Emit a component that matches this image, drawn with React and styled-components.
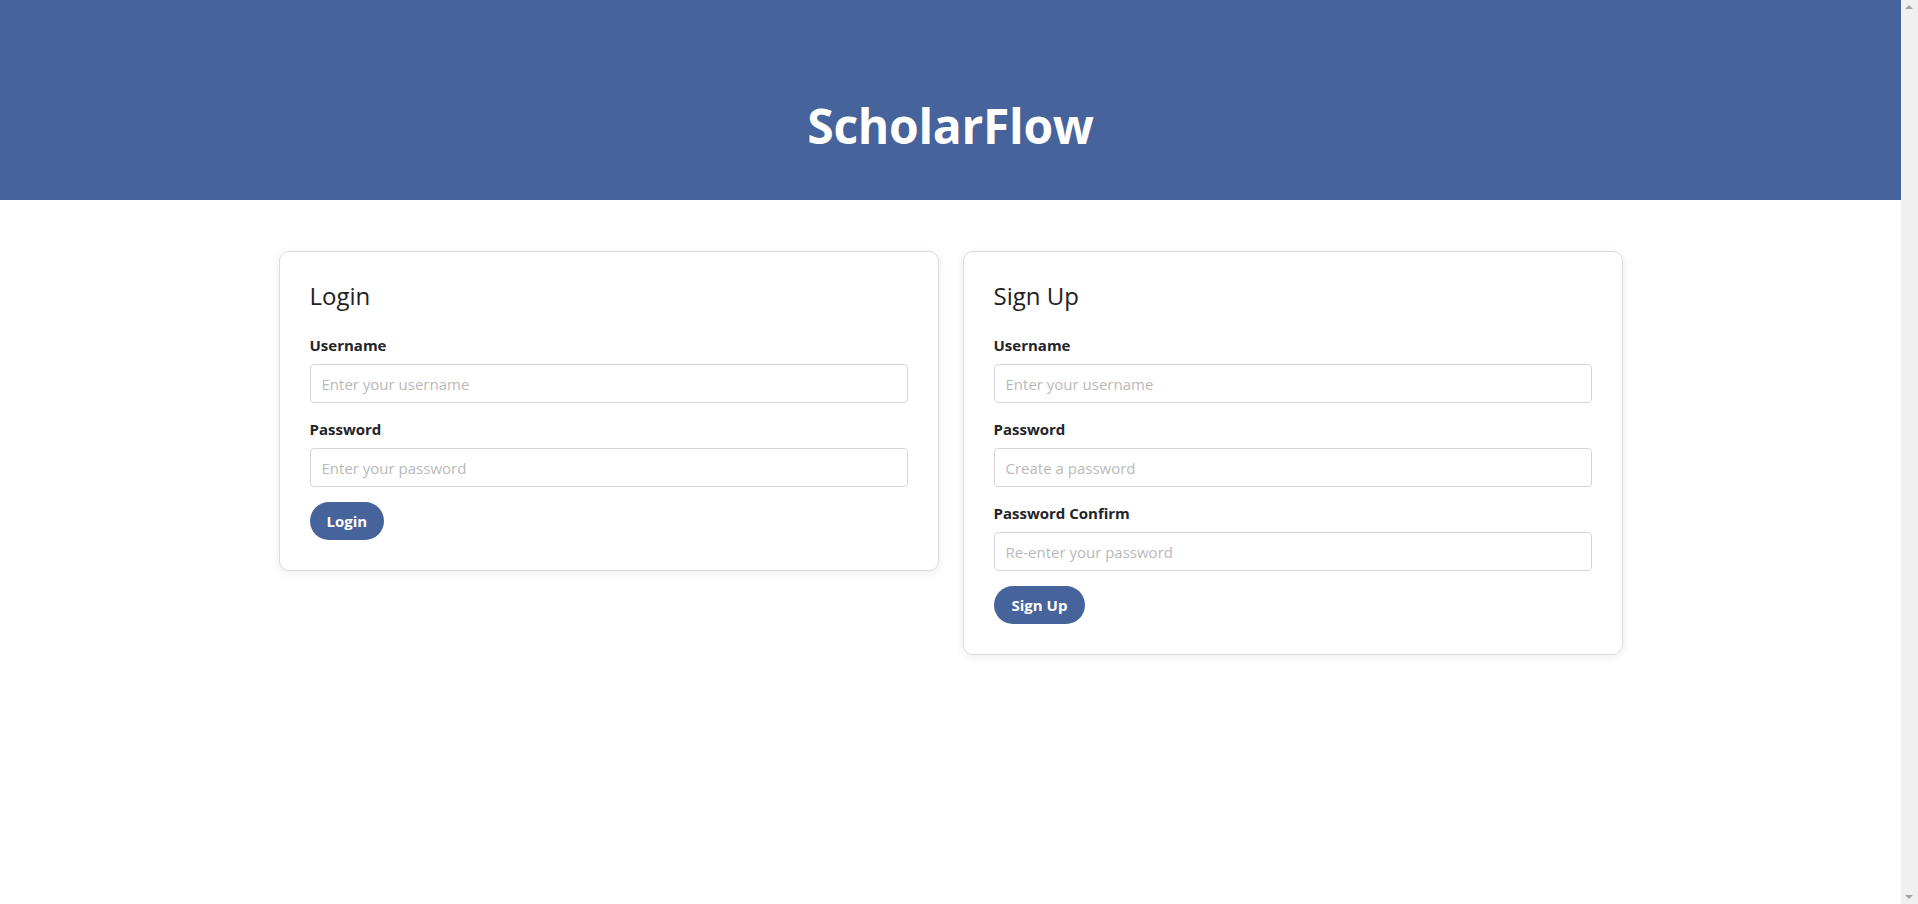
import React from "react";
import styled, { createGlobalStyle } from "styled-components";

const GlobalStyle = createGlobalStyle`
  * { box-sizing: border-box; }
  body {
    margin: 0;
    min-height: 100vh;
    border-right: 17px solid #f0f0f0;
    font-family: "Open Sans", "Noto Sans", "Liberation Sans", sans-serif;
    color: #212529;
    background: #ffffff;
  }
  body::before,
  body::after {
    content: "";
    position: fixed;
    right: 5px;
    width: 0;
    height: 0;
    border-left: 4px solid transparent;
    border-right: 4px solid transparent;
  }
  body::before {
    top: 5px;
    border-bottom: 4px solid #a3a3a3;
  }
  body::after {
    bottom: 5px;
    border-top: 4px solid #a3a3a3;
  }
`;

const Header = styled.header`
  height: 200px;
  background: #46639c;
  padding-top: 97px;
  text-align: center;
`;

const Brand = styled.h1`
  margin: 0;
  font-size: 48px;
  line-height: 1.2;
  font-weight: 700;
  color: #ffffff;
  letter-spacing: -0.3px;
`;

const Main = styled.main`
  max-width: 1344px;
  margin: 0 auto;
  padding-top: 51px;
  display: grid;
  grid-template-columns: 1fr 1fr;
  gap: 24px;
  align-items: start;
`;

const Card = styled.section`
  background: #fff;
  border: 1px solid #dcdcdc;
  border-radius: 10px;
  box-shadow: 0 2px 10px rgba(0, 0, 0, 0.08);
  padding: 30px;
`;

const CardTitle = styled.h2`
  margin: 0 0 23px;
  font-size: 24px;
  line-height: 1.2;
  font-weight: 400;
  color: #222;
`;

const Group = styled.div`
  margin-bottom: 15px;
`;

const Label = styled.label`
  display: block;
  font-size: 15px;
  line-height: 22.5px;
  font-weight: 700;
  color: #212529;
  margin-bottom: 8px;
`;

const Input = styled.input`
  display: block;
  width: 100%;
  height: 38.5px;
  padding: 0 11px;
  font-family: inherit;
  font-size: 15px;
  color: #212529;
  border: 1px solid #d6d6d6;
  border-radius: 4px;
  outline: none;
  &::placeholder {
    color: #b9b9b9;
  }
`;

const Button = styled.button`
  height: 38px;
  padding: 0 ${(p) => p.$px}px;
  border: none;
  border-radius: 19px;
  background: #46639c;
  color: #fff;
  font-family: inherit;
  font-size: 15px;
  font-weight: 700;
  cursor: pointer;
`;

function Field({ label, placeholder, type = "text" }) {
  return (
    <Group>
      <Label>{label}</Label>
      <Input type={type} placeholder={placeholder} />
    </Group>
  );
}

export default function App() {
  return (
    <>
      <GlobalStyle />
      <Header>
        <Brand>ScholarFlow</Brand>
      </Header>
      <Main>
        <Card>
          <CardTitle>Login</CardTitle>
          <Field label="Username" placeholder="Enter your username" />
          <Field label="Password" placeholder="Enter your password" type="password" />
          <Button $px={17}>Login</Button>
        </Card>
        <Card>
          <CardTitle>Sign Up</CardTitle>
          <Field label="Username" placeholder="Enter your username" />
          <Field label="Password" placeholder="Create a password" type="password" />
          <Field label="Password Confirm" placeholder="Re-enter your password" type="password" />
          <Button $px={18}>Sign Up</Button>
        </Card>
      </Main>
    </>
  );
}
